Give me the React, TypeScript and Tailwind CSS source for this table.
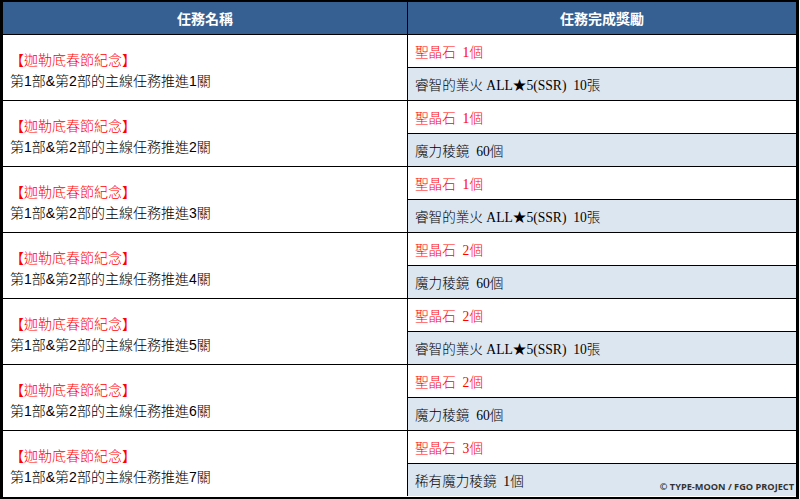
const rows = [
  { n: 1, stone: 1, reward: "睿智的業火 ALL★5(SSR)  10張" },
  { n: 2, stone: 1, reward: "魔力稜鏡  60個" },
  { n: 3, stone: 1, reward: "睿智的業火 ALL★5(SSR)  10張" },
  { n: 4, stone: 2, reward: "魔力稜鏡  60個" },
  { n: 5, stone: 2, reward: "睿智的業火 ALL★5(SSR)  10張" },
  { n: 6, stone: 2, reward: "魔力稜鏡  60個" },
  { n: 7, stone: 3, reward: "稀有魔力稜鏡  1個" },
];

const sans = "font-['Liberation_Sans','Noto_Sans_CJK_TC',sans-serif]";
const serif = "font-['Liberation_Serif','Noto_Sans_CJK_TC',serif]";

const MissionRow = ({ n, stone, reward, last }) => {
  return (
    <div className={`flex ${last ? "h-[65px]" : "h-[66px] border-b border-black"}`}>
      <div className={`w-[405px] border-r border-black flex flex-col justify-center pl-[7px] pt-[6px] text-[14px] leading-[21px] font-light ${sans}`}>
        <div className="text-[#ff0000]">【迦勒底春節紀念】</div>
        <div className="text-black">第1部&amp;第2部的主線任務推進{n}關</div>
      </div>
      <div className={`flex-1 flex flex-col text-[13.6px] leading-[20px] font-light ${serif}`}>
        <div className="h-[33px] border-b border-black bg-white flex items-center pl-[7px] pt-[3px] text-[#ff0000] whitespace-pre">
          聖晶石  {stone}個
        </div>
        <div className="relative flex-1 bg-[#dce6f1] flex items-center pl-[7px] pt-[3px] text-black whitespace-pre">
          {reward}
          {last && (
            <span className="absolute right-[2px] bottom-[5px] text-[9.2px] leading-none font-bold text-[#333] font-['Open_Sans',sans-serif]">
              © TYPE-MOON / FGO PROJECT
            </span>
          )}
        </div>
      </div>
    </div>
  );
};

export default function App() {
  return (
    <div className="w-[800px] h-[499px] bg-white">
      <div className="w-[799px] h-[499px] border-l-[3px] border-r-[3px] border-t-2 border-b-2 border-black flex flex-col">
        <div className={`flex h-[33px] border-b border-black bg-[#376092] text-white text-[14px] font-bold ${sans}`}>
          <div className="w-[405px] border-r border-black flex items-center justify-center pt-[3px]">任務名稱</div>
          <div className="flex-1 flex items-center justify-center pt-[3px]">任務完成獎勵</div>
        </div>
        {rows.map((r, i) => (
          <MissionRow key={r.n} {...r} last={i === rows.length - 1} />
        ))}
      </div>
    </div>
  );
}
